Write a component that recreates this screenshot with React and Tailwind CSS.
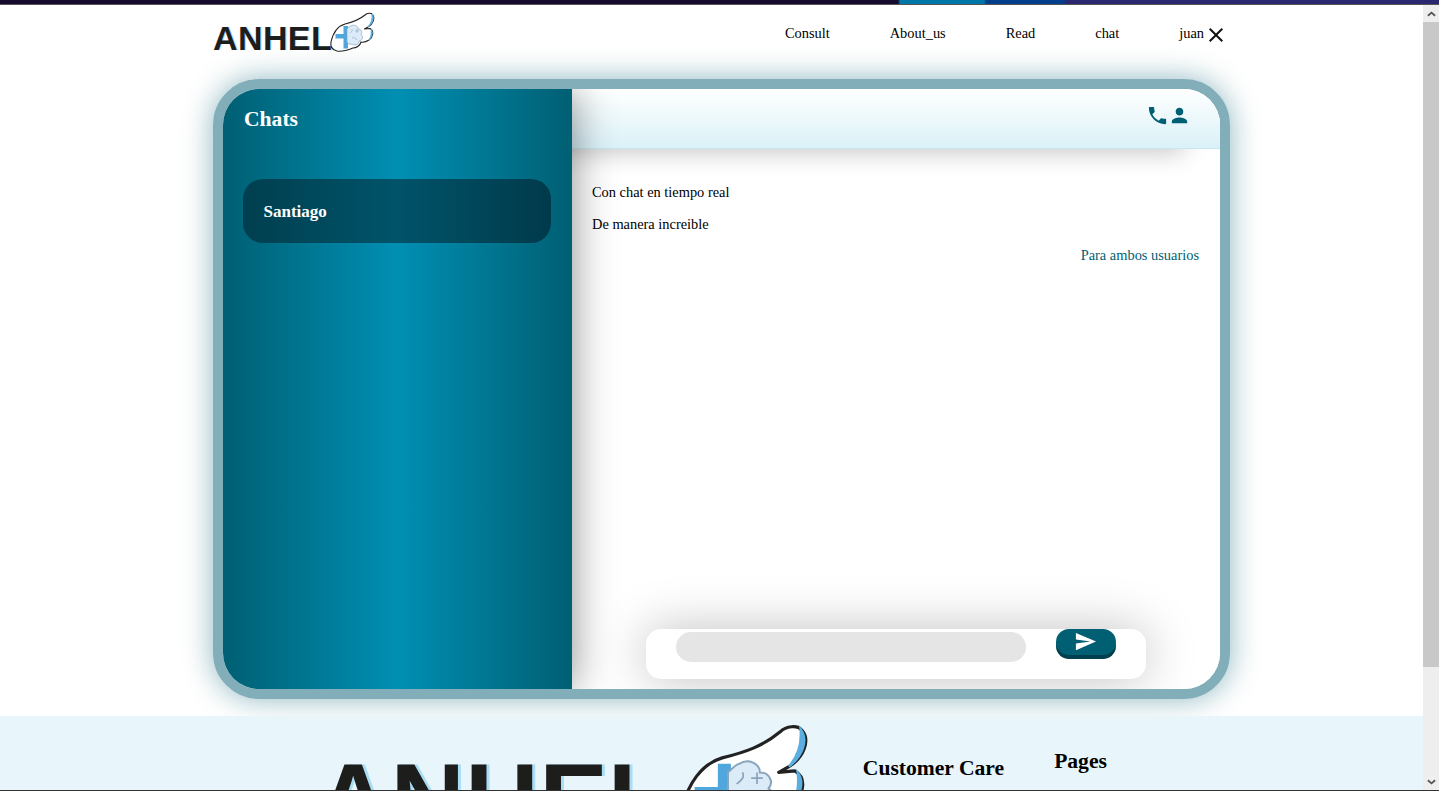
import React from 'react';

const serif = { fontFamily: '"Liberation Serif", "Times New Roman", serif' };

// wing + cross + brain mark, same drawing for the header and footer logos
function Wing({ className }) {
  return (
    <svg viewBox="0 0 50 44" className={className} fill="none">
      <path d="M4 31C6 22 11 15 18 13C26 11 32 9 38 4C40 2 44 1.5 45.5 3.5C48.5 7 46 13 41 16L37.5 18L43 17.5C47.5 20 46 26 42 29C39 31 36 31.5 34 31C33 35 29 37 26 37C21 39 15 41 10 40C6 39 3 36 4 31Z" fill="#ffffff" stroke="#222222" strokeWidth="1.1" strokeLinejoin="round" />
      <path d="M45 3C48 7 45.5 12.5 41 16C44 12.5 45.5 8 45 3Z M44 18C46.5 21 45 26 42 29C44 26 44.5 22 44 18Z" fill="#5aaee0" stroke="#5aaee0" strokeWidth="0.8" />
      <path d="M16.5 15H21V23H23V27.5H21V37.5H16.5V27.5H8.5V23H16.5Z" fill="#4fa7dd" />
      <path d="M24 15C27 13 31 15 31 18C34 18 36 21 34 23.5C37 26 35 30 32 30C32 34 27 35 25 33C22 34 20 32 20 30L20 18C21 17 23 15 24 15Z" fill="#dcebf8" stroke="#8aa4bd" strokeWidth="0.7" />
      <path d="M25 18C26 20 24 21 23 22M28 20L32 20M30 18L30 22M25 27C27 26 29 27 30 29" stroke="#8aa4bd" strokeWidth="0.6" />
    </svg>
  );
}

const Logo = ({ big }) => (
  <div className="flex items-start">
    <span
      className={
        big
          ? 'font-bold text-[103px] leading-none text-[#1d1d1b] [text-shadow:3px_0_0_#a9dcf5]'
          : 'font-bold text-[34px] leading-none tracking-[0.4px] text-[#1d1d1b] [text-shadow:1px_0_0_#a9dcf5]'
      }
      style={{ fontFamily: '"Liberation Sans", Arial, sans-serif' }}
    >
      ANHEL
    </span>
    {big ? <Wing className="w-[145px] h-[128px] shrink-0 -mt-[29px] -ml-[1px]" /> : <Wing className="w-[50px] h-[44px] shrink-0 -mt-[10px] -ml-[5px]" />}
  </div>
);

const Icon = ({ d, className }) => (
  <svg viewBox="0 0 24 24" className={className} fill="currentColor">
    <path d={d} />
  </svg>
);

const PHONE = 'M6.62 10.79c1.44 2.83 3.76 5.14 6.59 6.59l2.2-2.2c.27-.27.67-.36 1.02-.24 1.12.37 2.33.57 3.57.57.55 0 1 .45 1 1V20c0 .55-.45 1-1 1-9.39 0-17-7.61-17-17 0-.55.45-1 1-1h3.5c.55 0 1 .45 1 1 0 1.25.2 2.45.57 3.57.11.35.03.74-.25 1.02l-2.2 2.2z';
const PERSON = 'M12 12c2.21 0 4-1.79 4-4s-1.79-4-4-4-4 1.79-4 4 1.79 4 4 4zm0 2c-2.67 0-8 1.34-8 4v2h16v-2c0-2.66-5.33-4-8-4z';
const SEND = 'M2.01 21L23 12 2.01 3 2 10l15 2-15 2z';
const CLOSE = 'M19 6.41L17.59 5 12 10.59 6.41 5 5 6.41 10.59 12 5 17.59 6.41 19 12 13.41 17.59 19 19 17.59 13.41 12z';

function Navbar() {
  return (
    <nav className="h-[74px] pl-[213px] shrink-0">
      <div className="w-[1010px] flex items-start justify-between">
        <div className="mt-[16px]">
          <Logo />
        </div>
        <div className="flex items-center gap-[60px] text-[14.4px] text-black mt-[15px]">
          <a>Consult</a>
          <a>About_us</a>
          <a>Read</a>
          <a>chat</a>
          <div className="flex items-center">
            <a>juan</a>
            <Icon d={CLOSE} className="w-6 h-6 -mr-[5px] mt-[3px] text-[#111111]" />
          </div>
        </div>
      </div>
    </nav>
  );
}

function Sidebar() {
  return (
    <aside className="relative z-10 w-[349px] shrink-0 bg-[linear-gradient(90deg,#005f73_0%,#008fb3_50%,#005f73_100%)] shadow-[0_0_40px_rgba(0,0,0,0.45)]">
      <h2 className="pl-[21px] pt-[16px] text-[21.6px] leading-[29px] font-bold text-white">Chats</h2>
      <div className="mt-[45px] ml-[20px] w-[308px] h-[64px] rounded-[20px] flex items-center pl-[20.5px] pt-[2px] text-[17px] font-bold text-white bg-[linear-gradient(90deg,#003f4f_0%,#00536a_50%,#003a4a_100%)]">
        Santiago
      </div>
    </aside>
  );
}

function ChatPanel() {
  return (
    <section className="flex-1 flex flex-col bg-white">
      <header className="h-[60px] shrink-0 relative z-[5] flex justify-end pt-[15px] pr-[29px] text-[#005f73] bg-[linear-gradient(180deg,#ffffff_0%,#daf1f8_100%)] border-b border-[#c4e8f3] shadow-[-30px_10px_24px_-6px_rgba(0,0,0,0.22)]">
        <Icon d={PHONE} className="w-[23px] h-[23px]" />
        <Icon d={PERSON} className="w-[23px] h-[23px] -ml-[1px]" />
      </header>
      <div className="flex-1 flex flex-col pl-[20px] pr-[21px] pt-[33px] text-[14.4px] leading-[20px] text-black">
        <p>Con chat en tiempo real</p>
        <p className="mt-[12px]">De manera increible</p>
        <p className="mt-[11px] text-right text-[#005f73]">Para ambos usuarios</p>
      </div>
      <div className="self-center w-[500px] h-[50px] mb-[10px] rounded-[15px] bg-white flex items-start pl-[30px] shadow-[0_0_50px_rgba(0,0,0,0.25)]">
        <input className="mt-[3px] w-[350px] h-[30px] rounded-[15px] bg-[#e5e5e5] outline-none" />
        <button className="ml-[30px] w-[60px] h-[26px] rounded-[15px] bg-[#005f73] shadow-[0_4px_0_#003f4d] flex items-center justify-center text-white">
          <Icon d={SEND} className="w-[23px] h-[23px] -mt-[2px] -ml-[1px]" />
        </button>
      </div>
    </section>
  );
}

function Footer() {
  return (
    <footer className="mt-[17px] flex-1 bg-[#e8f5fb] flex overflow-hidden">
      <div className="ml-[316px] mt-[33px]">
        <Logo big />
      </div>
      <h3 className="ml-[48px] mt-[38px] text-[21.6px] leading-[29px] font-bold text-black whitespace-nowrap">Customer Care</h3>
      <h3 className="ml-[50px] mt-[31px] text-[21.6px] leading-[29px] font-bold text-black">Pages</h3>
    </footer>
  );
}

function Scrollbar() {
  return (
    <div className="w-4 shrink-0 bg-[#eeeeee] flex flex-col">
      <div className="h-[17px] flex items-center justify-center text-[#555555]">
        <svg viewBox="0 0 10 6" className="w-[9px] h-[6px]" fill="none" stroke="currentColor" strokeWidth="2"><path d="M1 5L5 1.5L9 5" /></svg>
      </div>
      <div className="h-[645px] bg-[#c8c8c8]" />
      <div className="flex-1" />
      <div className="h-[17px] flex items-center justify-center text-[#555555]">
        <svg viewBox="0 0 10 6" className="w-[9px] h-[6px]" fill="none" stroke="currentColor" strokeWidth="2"><path d="M1 1L5 4.5L9 1" /></svg>
      </div>
    </div>
  );
}

export default function App() {
  return (
    <div className="h-[791px] w-[1439px] overflow-hidden flex flex-col bg-white border-b border-[#333333]" style={serif}>
      {/* top strip */}
      <div className="h-[5px] shrink-0 border-b border-[#555555] bg-[linear-gradient(to_right,#170b2e_0,#170b2e_898px,#0077a8_900px,#0077a8_984px,#023e8a_986px,#023e8a_1064px,#2b2670_1066px,#2b2670_100%)]" />
      <div className="flex-1 flex min-h-0">
        <div className="flex-1 min-w-0 flex flex-col">
          <Navbar />
          <div className="pl-[213px] shrink-0">
            <main className="w-[1017px] h-[620px] border-[10px] border-[#82aeba] rounded-[46px] flex overflow-hidden shadow-[0_0_30px_rgba(0,95,115,0.45)]">
              <Sidebar />
              <ChatPanel />
            </main>
          </div>
          <Footer />
        </div>
        <Scrollbar />
      </div>
    </div>
  );
}
